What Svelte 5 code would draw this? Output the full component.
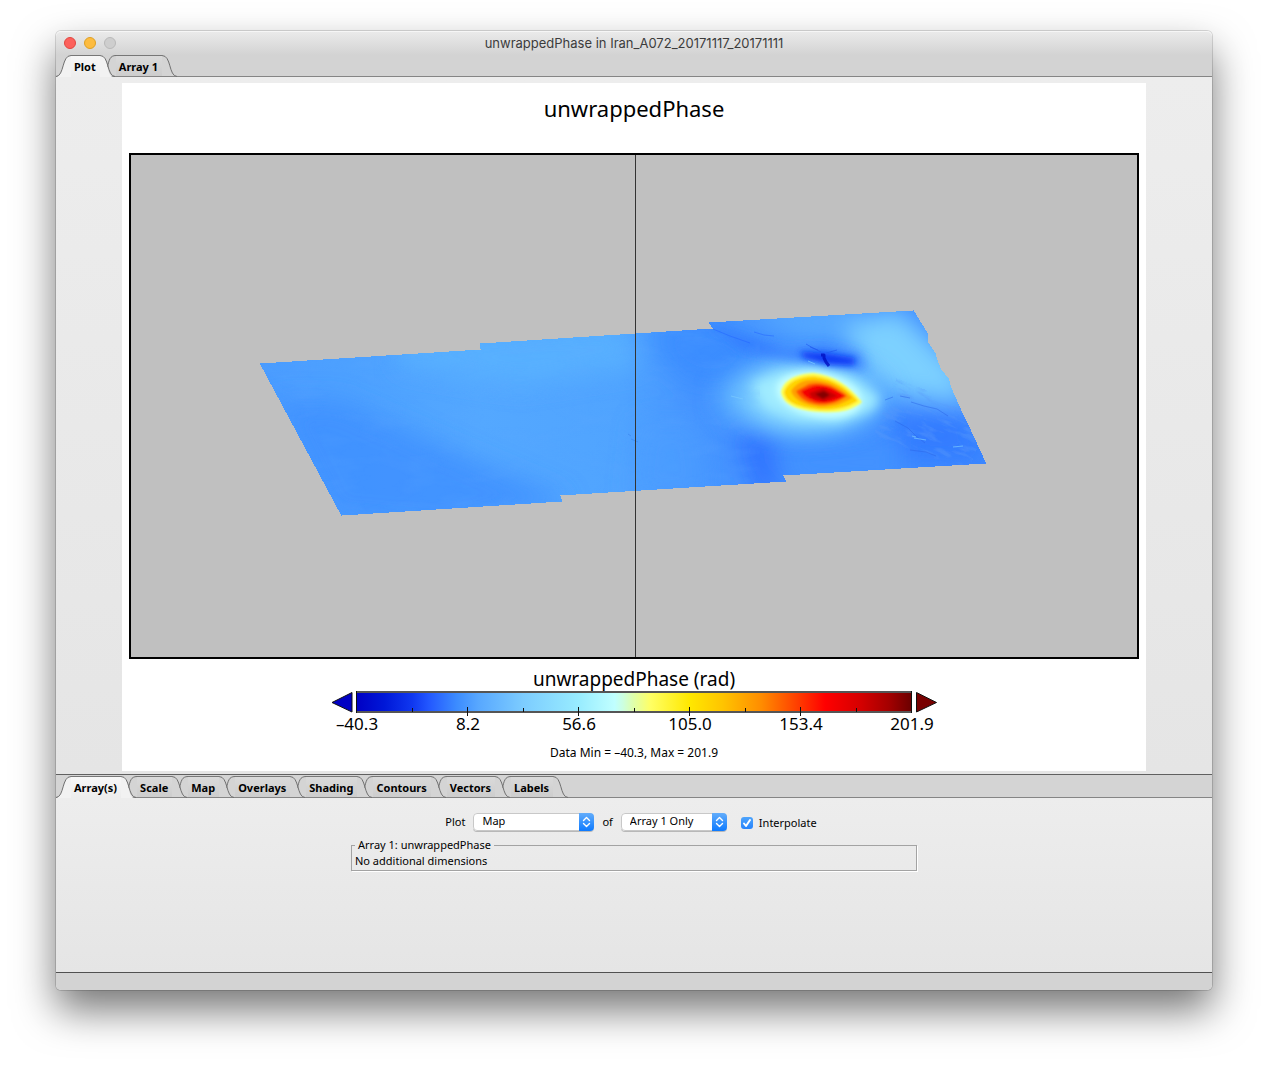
<script>
  const plotTabs = ['Plot', 'Array 1'];
  const optionTabs = ['Array(s)', 'Scale', 'Map', 'Overlays', 'Shading', 'Contours', 'Vectors', 'Labels'];

  let activePlot = $state('Plot');
  let activeOption = $state('Array(s)');
  let interpolate = $state(true);

  const palette = [
    [0, '#0000c4'], [5, '#0018d8'], [10, '#1038f0'], [13, '#2358ff'], [18, '#3c8cff'], [22, '#58a8ff'], [30, '#7cccff'],
    [40, '#98ecff'], [46.5, '#c0ffff'], [48, '#ccffe0'], [50, '#e0ffa8'], [53, '#ffff64'], [60, '#ffe800'],
    [66, '#ffc400'], [73, '#ff8c00'], [80, '#ff3800'], [84.5, '#ff0000'], [91, '#d40000'],
    [96, '#a40000'], [100, '#6c0000']
  ];

  const labels = ['–40.3', '8.2', '56.6', '105.0', '153.4', '201.9'];
  const labelX = (i) => 357 + i * 111;
  const minorX = (i) => 412 + i * 111;

  // Corners of the radar swath, clockwise from the west corner.
  const swath = [
    [260, 363], [481, 349], [480, 343], [713, 328], [709, 322], [913, 310], [927, 333], [928, 343],
    [935, 353], [937, 360], [941, 370], [948, 378], [951, 388], [954, 395], [963, 415], [968, 425],
    [986, 464], [783, 476], [786, 482], [560, 496], [562, 502], [342, 516]
  ];

  function stepped(points) {
    let d = `M${points[0][0]} ${points[0][1]}`;
    points.forEach(([x0, y0], i) => {
      const [x1, y1] = points[(i + 1) % points.length];
      const rows = Math.abs(y1 - y0);
      const columns = Math.abs(x1 - x0);
      const steps = Math.min(rows, columns) || 1;
      for (let s = 1; s <= steps; s++) {
        const x = Math.round(x0 + ((x1 - x0) * s) / steps);
        const y = Math.round(y0 + ((y1 - y0) * s) / steps);
        d += `H${x}V${y}`;
      }
    });
    return d + 'Z';
  }
  const outline = stepped(swath);
</script>

{#snippet tabStrip(names, active, pick, label)}
  <div class="tabs" role="tablist" aria-label={label}>
    {#each names as name, i}
      {@const foot = name === active ? 22 : 21}
      <button
        class="tab"
        class:first={i === 0}
        class:active={name === active}
        role="tab"
        aria-selected={name === active}
        style:z-index={names.length - i}
        onclick={() => pick(name)}
      >
        {#if i === 0}
          <svg class="edge lead" width="15" height="22" viewBox="0 0 15 22" aria-hidden="true">
            <path class="fill" d="M0 {foot}C8 21 6 1 15 .5V{foot}Z" />
            <path class="line" d="M0 21.5C8.500 21 5.500 .5 15 .5" />
          </svg>
        {:else}
          <svg class="edge lead" width="9" height="22" viewBox="0 0 9 22" aria-hidden="true">
            <path class="fill" d="M0 12C2 5 3 .5 9 .5V{foot}H5Z" />
            <path class="line" d="M.5 12C2 5 3 .5 9 .5" />
          </svg>
        {/if}
        <span class="name">{name}</span>
        <svg class="edge trail" width="15" height="22" viewBox="0 0 15 22" aria-hidden="true">
          <path class="fill" d="M0 .5C9 .5 6 20 13 {foot}H0Z" />
          <path class="line" d="M0 .5C9.500 .5 6.500 21 15 21.500" />
        </svg>
      </button>
    {/each}
  </div>
{/snippet}

<main class="window">
  <header class="chrome">
    <div class="titlebar">
      <div class="lights">
        <button class="light close" aria-label="Close"></button>
        <button class="light minimize" aria-label="Minimize"></button>
        <button class="light zoom" aria-label="Zoom" disabled></button>
      </div>
      <h1>unwrappedPhase in Iran_A072_20171117_20171111</h1>
    </div>
    {@render tabStrip(plotTabs, activePlot, (n) => (activePlot = n), 'Views')}
  </header>

  <section class="stage">
    <figure class="plot">
      <h2>unwrappedPhase</h2>
      <svg class="map" viewBox="129 153 1010 506" role="img" aria-label="Map of unwrapped phase">
        <defs>
          <clipPath id="swath"><path d={outline} /></clipPath>
          <filter id="b1" x="-30%" y="-30%" width="160%" height="160%"><feGaussianBlur stdDeviation="1" /></filter>
          <filter id="b3" x="-50%" y="-80%" width="200%" height="260%"><feGaussianBlur stdDeviation="3" /></filter>
          <filter id="b6" x="-60%" y="-60%" width="220%" height="220%"><feGaussianBlur stdDeviation="6" /></filter>
          <filter id="b12" x="-60%" y="-60%" width="220%" height="220%"><feGaussianBlur stdDeviation="12" /></filter>
          <filter id="grain" x="0" y="0" width="100%" height="100%">
            <feTurbulence type="fractalNoise" baseFrequency=".025 .07" numOctaves="4" seed="8" />
            <feColorMatrix values="0 0 0 0 .12  0 0 0 0 .4  0 0 0 0 1  1.6 0 0 0 -.7" />
          </filter>
          <filter id="ridges" x="0" y="0" width="100%" height="100%">
            <feTurbulence type="fractalNoise" baseFrequency=".05 .2" numOctaves="4" seed="3" />
            <feColorMatrix values="0 0 0 0 .1  0 0 0 0 .32  0 0 0 0 .95  4 0 0 0 -2" />
          </filter>
          <linearGradient id="base" gradientUnits="userSpaceOnUse" x1="260" y1="0" x2="986" y2="0">
            <stop offset="0" stop-color="#4a9cff" />
            <stop offset=".15" stop-color="#4ea2ff" />
            <stop offset=".3" stop-color="#54a8ff" />
            <stop offset=".5" stop-color="#50a4ff" />
            <stop offset=".6" stop-color="#4594ff" />
            <stop offset="1" stop-color="#3f8cff" />
          </linearGradient>
        </defs>
        <rect x="130" y="154" width="1008" height="504" fill="#c0c0c0" />
        <g clip-path="url(#swath)">
          <rect x="250" y="300" width="750" height="220" fill="url(#base)" />
          <g filter="url(#b12)">
            <path d="M270 400 340 400 480 462 570 500 450 530 330 520Z" fill="#4090ff" opacity=".85" />
            <path d="M400 340 620 325 640 365 520 385 400 365Z" fill="#59b0ff" />
            <path d="M650 320 715 320 770 350 735 385 690 385 660 360Z" fill="#388aff" opacity=".7" />
            <path d="M735 430 772 430 780 495 755 495Z" fill="#2c6cff" opacity=".8" />
            <path d="M640 420 700 420 710 500 630 500Z" fill="#4c9eff" opacity=".7" />
            <path d="M735 310 850 300 870 345 800 340Z" fill="#54a8ff" />
            <path d="M850 320 900 310 960 370 970 405 900 395 870 380 850 345Z" fill="#7dd0ff" />
            <path d="M885 415 960 405 990 465 900 460Z" fill="#3078ff" opacity=".8" />
            <path d="M780 440 900 435 900 490 790 485Z" fill="#4292ff" />
          </g>
          <ellipse cx="803" cy="397" rx="84" ry="36" fill="#64b8ff" filter="url(#b12)" />
          <ellipse cx="808" cy="396" rx="62" ry="31" fill="#8cdcff" filter="url(#b12)" />
          <path d="M700 318 735 334 785 350 825 346 860 354 866 370 840 368 800 361 745 350Z" fill="#3078ff" opacity=".85" filter="url(#b6)" />
          <path d="M800 352 825 353 855 358 854 365 828 365 804 358Z" fill="#0f38f4" filter="url(#b3)" />
          <path d="M752 384 780 373 815 369 850 378 880 398 872 410 838 422 795 419 765 407Z" fill="#a0ecff" filter="url(#b6)" />
          <ellipse cx="819" cy="395" rx="43" ry="22" fill="#c4ffff" transform="rotate(10 819 395)" filter="url(#b3)" />
          <g filter="url(#b1)">
            <path d="M781 392C784 377 802 374 813 373 834 375 849 386 862 402 852 410 842 413 822 412 798 411 783 405 781 392Z" fill="#ffff50" />
            <path d="M784 392C788 379 805 376 814 376 834 378 848 389 858 401 848 407 839 410 821 410 800 408 785 403 784 392Z" fill="#ffd400" />
            <path d="M791 391C797 381 808 379 817 380 834 382 844 390 852 398 841 405 832 407 820 407 804 405 794 400 791 391Z" fill="#ffa000" />
            <path d="M796 391 809 384C823 381 836 387 847 396 837 403 827 406 815 404 804 402 799 397 796 391Z" fill="#ff5000" />
            <path d="M801 391 813 386C826 384 835 389 845 396 835 402 827 404 816 402 808 399 803 396 801 391Z" fill="#f40000" />
            <path d="M809 393 823 388 838 396 824 401 812 398Z" fill="#c80000" />
            <path d="M815 394 824 391 830 395 823 399Z" fill="#850000" />
          </g>
          <rect x="250" y="300" width="510" height="220" filter="url(#grain)" opacity=".22" />
          <g transform="rotate(22 930 430)">
            <rect x="880" y="395" width="100" height="60" filter="url(#ridges)" opacity=".4" />
          </g>
          <g fill="none" stroke-linejoin="round">
            <path d="M821 355H824V358L826 362 829 366" stroke="#0010c0" stroke-width="3" opacity=".8" />
            <path d="M806 344 813 348 821 352M826 353 837 350M810 347 818 350" stroke="#2058ef" opacity=".6" />
            <path d="M713 329 730 336 750 343M754 332 764 335 774 336" stroke="#2464ff" opacity=".5" />
            <path d="M885 400 893 397M911 402 924 406 937 409 948 416M900 396 910 398M895 421 908 428 916 436 925 443M910 450 926 452 936 456" stroke="#2c65e8" opacity=".5" />
            <path d="M914 438 926 440M953 447 963 446M912 436 916 437M731 396 743 399M808 361 815 364" stroke="#7acbff" opacity=".7" />
            <path d="M628 434 631 436M631 439 638 442" stroke="#3a86ef" opacity=".7" />
          </g>
        </g>
        <path d="M635.500 154V658" stroke="#333" />
        <rect x="130" y="154" width="1008" height="504" fill="none" stroke="#000" stroke-width="2" />
      </svg>
      <figcaption>
        <h3>unwrappedPhase (rad)</h3>
        <svg class="scale" viewBox="319 691 630 44" role="img" aria-label="Colour scale">
          <defs>
            <linearGradient id="palette">
              {#each palette as [offset, color]}
                <stop offset="{offset}%" stop-color={color} />
              {/each}
            </linearGradient>
          </defs>
          <path d="M352 692.500V712L332 702.500Z" fill="#0000c4" stroke="#111" />
          <path d="M916.500 692.500V712L936.500 702.500Z" fill="#780000" stroke="#111" />
          <rect x="357" y="692" width="554" height="20" fill="url(#palette)" />
          <path d="M356 692H912M356 712H912" stroke="#555" stroke-width="2" />
          <path d="M356.500 691V713M911.500 691V713" stroke="#111" />
          {#each [0, 1, 2, 3, 4] as i}
            <rect class="tick" x={minorX(i)} y="708" width="1" height="4" />
          {/each}
          {#each [1, 2, 3, 4] as i}
            <rect class="tick" x={labelX(i) - 1} y="707" width="1" height="9" />
          {/each}
          {#each labels as text, i}
            <text x={labelX(i)} y="730" text-anchor="middle">{text}</text>
          {/each}
        </svg>
        <p>Data Min = –40.3, Max = 201.9</p>
      </figcaption>
    </figure>
  </section>

  <section class="options">
    {@render tabStrip(optionTabs, activeOption, (n) => (activeOption = n), 'Plot options')}
    <form class="panel">
      <div class="controls">
        <label for="kind">Plot</label>
        <span class="picker kind">
          <select id="kind"><option>Map</option></select>
          <svg viewBox="0 0 15 18" width="15" height="18" aria-hidden="true"><path d="M4.500 7.500 7.500 4.500 10.500 7.500M4.500 10.500 7.500 13.500 10.500 10.500" /></svg>
        </span>
        <label for="source">of</label>
        <span class="picker source">
          <select id="source"><option>Array 1 Only</option></select>
          <svg viewBox="0 0 15 18" width="15" height="18" aria-hidden="true"><path d="M4.500 7.500 7.500 4.500 10.500 7.500M4.500 10.500 7.500 13.500 10.500 10.500" /></svg>
        </span>
        <label class="check">
          <span class="box">
            <input type="checkbox" bind:checked={interpolate} />
            <svg viewBox="0 0 12 12" width="12" height="12" aria-hidden="true"><path d="M3 6.500 5 9 9 3" /></svg>
          </span>
          Interpolate
        </label>
      </div>
      <fieldset>
        <legend>Array 1: unwrappedPhase</legend>
        <p>No additional dimensions</p>
      </fieldset>
    </form>
  </section>
  <footer class="status"></footer>
</main>

<style>
  :global(body) {
    margin: 0;
    background: #fff;
  }

  .window {
    display: flex;
    flex-direction: column;
    margin: 31px 56px 79px;
    border-radius: 5px;
    background: #ececec;
    box-shadow: 0 0 0 1px rgba(0, 0, 0, 0.14), 0 20px 40px rgba(0, 0, 0, 0.54);
    color: #000;
    font: 11px/16px 'Noto Sans', 'Open Sans', sans-serif;
  }

  h1, h2, h3, p, figure {
    margin: 0;
    font-weight: 400;
  }

  .chrome {
    border-radius: 5px 5px 0 0;
    background: linear-gradient(#ebebeb, #d3d3d3 24px);
    box-shadow: inset 0 1px #f6f6f6;
  }

  .titlebar {
    display: grid;
    grid-template-columns: 1fr auto 1fr;
    align-items: center;
    height: 24px;
  }

  .titlebar h1 {
    color: #3c3c3c;
    font: 13px/24px Inter, sans-serif;
  }

  .lights {
    display: flex;
    gap: 8px;
    padding-left: 8px;
  }

  .light {
    width: 12px;
    height: 12px;
    padding: 0;
    border: 1px solid #e2463f;
    border-radius: 50%;
    background: #fc615c;
  }

  .minimize {
    border-color: #dfa023;
    background: #fdbc40;
  }

  .zoom {
    border-color: #b9b9b9;
    background: #cecece;
  }

  .tabs {
    display: flex;
    height: 22px;
    box-shadow: inset 0 -1px #858585;
  }

  .tab {
    position: relative;
    height: 22px;
    padding: 1px 11px 0 12px;
    border: 0;
    background: none;
    color: #000;
    font: bold 11px/22px 'Noto Sans', 'Open Sans', sans-serif;
    --top: #dadada;
    --low: #cdcdcd;
  }

  .tab.first {
    padding-left: 18px;
  }

  .tab.active {
    --top: #f7f7f7;
    --low: #ededed;
  }

  .name {
    position: relative;
    z-index: 1;
  }

  .tab::before {
    position: absolute;
    inset: 0 7px 1px 9px;
    border-top: 1px solid #777;
    background: linear-gradient(var(--top), var(--low));
    content: '';
  }

  .tab.first::before {
    left: 15px;
  }

  .tab.active::before {
    bottom: 0;
  }

  .edge {
    position: absolute;
    top: 0;
  }

  .lead {
    left: 0;
  }

  .trail {
    right: -8px;
  }

  .fill {
    fill: color-mix(in srgb, var(--top), var(--low));
  }

  .line {
    fill: none;
    stroke: #707070;
  }

  .stage {
    padding: 6px 0 3px;
    background: linear-gradient(#ededed, #e5e5e5);
  }

  .plot {
    max-width: 1010px;
    margin: 0 auto;
    padding: 0 7px 6px;
    background: #fff;
    text-align: center;
  }

  .plot h2 {
    height: 70px;
    font-size: 22px;
    line-height: 50px;
  }

  .map {
    display: block;
    width: 100%;
  }

  .plot h3 {
    padding-top: 8px;
    font-size: 19px;
    line-height: 24px;
  }

  .scale {
    display: block;
    width: 630px;
    max-width: 100%;
    margin: 0 auto 6px;
  }

  .scale text {
    font-size: 17px;
  }

  .tick {
    fill: #111;
  }

  .plot p {
    font-size: 12px;
    line-height: 24px;
  }

  .options {
    padding-top: 1px;
    border-top: 1px solid #606060;
    background: #d4d4d4;
  }

  .panel {
    min-height: 159px;
    padding: 15px 16px 0;
    border-bottom: 1px solid #505050;
    background: linear-gradient(#ededed, #e5e5e5);
  }

  .controls {
    display: flex;
    align-items: center;
    justify-content: center;
    gap: 8px;
    height: 18px;
    padding-right: 6px;
  }

  .picker {
    position: relative;
    display: flex;
    height: 18px;
    overflow: hidden;
    border-radius: 4px;
    box-shadow: 0 1px #b8b8b8;
  }

  .kind {
    width: 121px;
  }

  .source {
    width: 106px;
  }

  .picker select {
    width: 100%;
    padding: 0 20px 2px 8px;
    border: 1px solid #c8c8c8;
    border-radius: 4px;
    appearance: none;
    background: #fff;
    color: #000;
    font: 11px/14px 'Noto Sans', 'Open Sans', sans-serif;
  }

  .picker svg {
    position: absolute;
    top: 0;
    right: 0;
    background: linear-gradient(#63adfb, #0d7aff);
    pointer-events: none;
  }

  .picker path,
  .box path {
    fill: none;
    stroke: #fff;
    stroke-width: 1.4;
    stroke-linecap: round;
    stroke-linejoin: round;
  }

  .box path {
    stroke-width: 2;
  }

  .check {
    display: flex;
    align-items: center;
    gap: 6px;
    padding: 2px 0 0 6px;
  }

  .box {
    position: relative;
    display: flex;
  }

  .box input {
    width: 12px;
    height: 12px;
    margin: 0;
    border-radius: 3px;
    appearance: none;
    background: #fff;
  }

  .box input:checked {
    background: linear-gradient(#4ea4fc, #2684fc);
  }

  .box svg {
    position: absolute;
    inset: 0;
    pointer-events: none;
  }

  fieldset {
    max-width: 558px;
    margin: 6px auto 0;
    padding: 0 3px 1px;
    border: 1px solid #a3a3a3;
    box-shadow: 1px 1px #fff;
  }

  legend {
    padding: 0 3px;
    line-height: 16px;
  }

  .status {
    height: 17px;
    border-radius: 0 0 5px 5px;
    background: #d3d3d3;
  }
</style>
